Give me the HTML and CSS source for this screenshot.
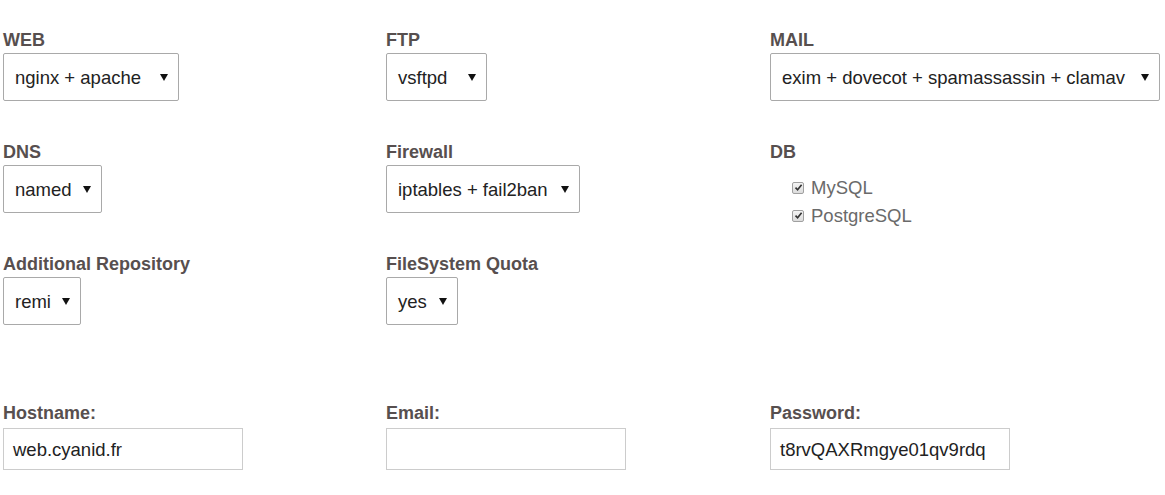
FILE: index.html
```html
<!DOCTYPE html>
<html>
<head>
<meta charset="utf-8">
<link rel="stylesheet" href="styles.css">
</head>
<body>
<form class="form">
  <div class="row">
    <div class="field">
      <div class="label">WEB</div>
      <div class="select w-web"><span class="val">nginx + apache</span><svg class="arrow" width="8" height="7" viewBox="0 0 8 7"><polygon points="0,0 8,0 4,7"/></svg></div>
    </div>
    <div class="field">
      <div class="label">FTP</div>
      <div class="select w-ftp"><span class="val">vsftpd</span><svg class="arrow" width="8" height="7" viewBox="0 0 8 7"><polygon points="0,0 8,0 4,7"/></svg></div>
    </div>
    <div class="field">
      <div class="label">MAIL</div>
      <div class="select w-mail"><span class="val">exim + dovecot + spamassassin + clamav</span><svg class="arrow" width="8" height="7" viewBox="0 0 8 7"><polygon points="0,0 8,0 4,7"/></svg></div>
    </div>
  </div>
  <div class="row">
    <div class="field">
      <div class="label">DNS</div>
      <div class="select w-dns"><span class="val">named</span><svg class="arrow" width="8" height="7" viewBox="0 0 8 7"><polygon points="0,0 8,0 4,7"/></svg></div>
    </div>
    <div class="field">
      <div class="label">Firewall</div>
      <div class="select w-fw"><span class="val">iptables + fail2ban</span><svg class="arrow" width="8" height="7" viewBox="0 0 8 7"><polygon points="0,0 8,0 4,7"/></svg></div>
    </div>
    <div class="field">
      <div class="label">DB</div>
      <ul class="checks">
        <li class="check"><span class="box"><svg width="9" height="9" viewBox="0 0 9 9"><path d="M1.5 4.6 L3.6 6.8 L7.6 1.8" fill="none" stroke="#333" stroke-width="1.6"/></svg></span>MySQL</li>
        <li class="check"><span class="box"><svg width="9" height="9" viewBox="0 0 9 9"><path d="M1.5 4.6 L3.6 6.8 L7.6 1.8" fill="none" stroke="#333" stroke-width="1.6"/></svg></span>PostgreSQL</li>
      </ul>
    </div>
  </div>
  <div class="row">
    <div class="field">
      <div class="label">Additional Repository</div>
      <div class="select w-repo"><span class="val">remi</span><svg class="arrow" width="8" height="7" viewBox="0 0 8 7"><polygon points="0,0 8,0 4,7"/></svg></div>
    </div>
    <div class="field">
      <div class="label">FileSystem Quota</div>
      <div class="select w-quota"><span class="val">yes</span><svg class="arrow" width="8" height="7" viewBox="0 0 8 7"><polygon points="0,0 8,0 4,7"/></svg></div>
    </div>
    <div class="field"></div>
  </div>
  <div class="row last">
    <div class="field">
      <div class="label">Hostname:</div>
      <div class="input">web.cyanid.fr</div>
    </div>
    <div class="field">
      <div class="label">Email:</div>
      <div class="input"></div>
    </div>
    <div class="field">
      <div class="label">Password:</div>
      <div class="input">t8rvQAXRmgye01qv9rdq</div>
    </div>
  </div>
</form>
</body>
</html>
```
FILE: styles.css
```css
html, body {
  margin: 0;
  padding: 0;
  background: #fff;
}
body {
  font-family: "Liberation Sans", Arial, sans-serif;
  color: #222;
}
.form {
  padding: 30px 0 0 3px;
}
.row {
  display: grid;
  grid-template-columns: 383px 384px 395px;
  height: 71px;
  margin-bottom: 41px;
}
.row.last {
  margin-top: 78px;
}
.label {
  font-size: 18px;
  font-weight: bold;
  color: #574f4f;
  line-height: 20px;
  margin-bottom: 3px;
}
.select {
  box-sizing: border-box;
  height: 48px;
  border: 1px solid #a9a9a9;
  border-radius: 2px;
  display: flex;
  align-items: center;
  justify-content: space-between;
  padding: 2px 10px 0 11px;
  font-size: 18.5px;
  color: #222;
  background: #fff;
}
.arrow { fill: #111; margin-top: -1px; }
.w-web { width: 176px; }
.w-ftp { width: 101px; }
.w-mail { width: 390px; }
.w-dns { width: 99px; }
.w-fw { width: 194px; }
.w-repo { width: 78px; }
.w-quota { width: 72px; }
.checks {
  list-style: none;
  margin: 12px 0 0 0;
  padding: 0 0 0 22px;
}
.check {
  display: flex;
  align-items: center;
  height: 28px;
  font-size: 18.5px;
  color: #6a6a6a;
}
.box {
  box-sizing: border-box;
  width: 12px;
  height: 12px;
  border: 1px solid #a0a0a0;
  border-radius: 2px;
  background: linear-gradient(#f4f4f4, #dcdcdc);
  display: flex;
  align-items: center;
  justify-content: center;
  margin-right: 7px;
  margin-top: -1px;
}
.row.last .label { margin-bottom: 5px; }
.input {
  box-sizing: border-box;
  width: 240px;
  height: 42px;
  border: 1px solid #ccc;
  padding: 1px 9px 0;
  display: flex;
  align-items: center;
  font-size: 18.5px;
  color: #222;
}
```
